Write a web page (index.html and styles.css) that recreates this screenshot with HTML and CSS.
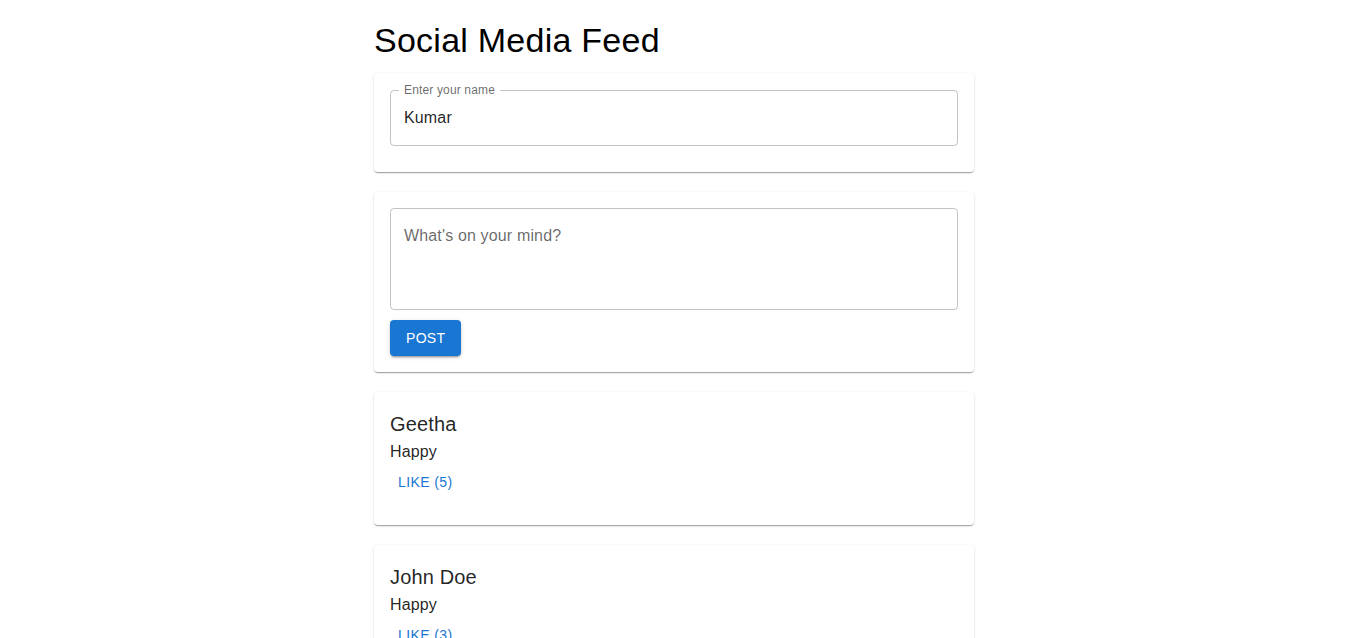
FILE: index.html
```html
<!DOCTYPE html>
<html lang="en">
<head>
<meta charset="utf-8">
<title>Social Media Feed</title>
<link rel="stylesheet" href="styles.css">
</head>
<body>
<main class="feed">
  <h4 class="title">Social Media Feed</h4>

  <section class="card card-name">
    <div class="outlined">
      <fieldset class="outline"><legend class="notch"><span>Enter your name</span></legend></fieldset>
      <label class="float-label">Enter your name</label>
      <input class="text-input" type="text" value="Kumar">
    </div>
  </section>

  <section class="card card-compose">
    <div class="outlined multiline">
      <fieldset class="outline plain"></fieldset>
      <textarea class="text-area" rows="3" placeholder="What's on your mind?"></textarea>
    </div>
    <button class="btn-contained">Post</button>
  </section>

  <article class="card post">
    <h6 class="post-author">Geetha</h6>
    <p class="post-body">Happy</p>
    <button class="btn-text">Like (5)</button>
  </article>

  <article class="card post">
    <h6 class="post-author">John Doe</h6>
    <p class="post-body">Happy</p>
    <button class="btn-text">Like (3)</button>
  </article>
</main>
</body>
</html>
```

FILE: styles.css
```css
* { box-sizing: border-box; }

html, body {
  margin: 0;
  padding: 0;
  background: #fff;
}

body {
  font-family: "Liberation Sans", Arial, Helvetica, sans-serif;
  color: rgba(0, 0, 0, 0.87);
}

.feed {
  width: 600px;
  margin: 0 auto;
  padding: 19px 0 40px;
  display: flex;
  flex-direction: column;
}

.title {
  margin: 0 0 12px;
  font-size: 34px;
  line-height: 42px;
  font-weight: 400;
  letter-spacing: 0.25px;
  color: #000;
}

.card {
  background: #fff;
  border-radius: 4px;
  box-shadow: 0 2px 1px -1px rgba(0,0,0,0.2), 0 1px 1px 0 rgba(0,0,0,0.14), 0 1px 3px 0 rgba(0,0,0,0.12);
  margin-bottom: 20px;
}

.card-name {
  padding: 17px 16px 26px;
}

.card-compose {
  padding: 16px;
  display: flex;
  flex-direction: column;
  align-items: flex-start;
  gap: 10px;
}

.outlined {
  position: relative;
  width: 100%;
  height: 56px;
}

.outlined.multiline {
  height: 102px;
}

.outline {
  position: absolute;
  top: -5px;
  left: 0;
  right: 0;
  bottom: 0;
  margin: 0;
  padding: 0 8px;
  border: 1px solid rgba(0, 0, 0, 0.23);
  border-radius: 4px;
  pointer-events: none;
  min-width: 0;
}

.outline.plain {
  top: 0;
}

.notch {
  float: unset;
  width: auto;
  max-width: 100%;
  height: 11px;
  padding: 0;
  font-size: 12px;
  visibility: hidden;
  white-space: nowrap;
  overflow: hidden;
  display: block;
}

.notch span {
  padding: 0 5px;
  display: inline-block;
  letter-spacing: 0.15px;
}

.float-label {
  position: absolute;
  top: -7px;
  left: 14px;
  font-size: 12px;
  line-height: 14px;
  letter-spacing: 0.15px;
  color: rgba(0, 0, 0, 0.6);
}

.text-input,
.text-area {
  display: block;
  width: 100%;
  border: 0;
  outline: 0;
  background: transparent;
  font-family: inherit;
  font-size: 16px;
  letter-spacing: 0.15px;
  color: rgba(0, 0, 0, 0.87);
  margin: 0;
}

.text-input {
  height: 56px;
  padding: 16.5px 14px;
  line-height: 23px;
}

.text-area {
  height: 102px;
  padding: 16px 14px;
  line-height: 23px;
  resize: none;
}

.text-area::placeholder {
  color: rgba(0, 0, 0, 0.6);
  opacity: 1;
}

.btn-contained {
  font-family: inherit;
  font-size: 14px;
  line-height: 24px;
  letter-spacing: 0.3px;
  text-transform: uppercase;
  color: #fff;
  background: #1976d2;
  border: 0;
  border-radius: 4px;
  padding: 6px 16px;
  min-width: 64px;
  box-shadow: 0 3px 1px -2px rgba(0,0,0,0.2), 0 2px 2px 0 rgba(0,0,0,0.14), 0 1px 5px 0 rgba(0,0,0,0.12);
  cursor: pointer;
}

.post {
  padding: 16px 16px 24px;
  display: flex;
  flex-direction: column;
  align-items: flex-start;
}

.post-author {
  margin: 0;
  font-size: 20px;
  line-height: 32px;
  font-weight: 400;
  letter-spacing: 0.15px;
}

.post-body {
  margin: 0;
  font-size: 16px;
  line-height: 24px;
  letter-spacing: 0.15px;
}

.btn-text {
  font-family: inherit;
  font-size: 14px;
  line-height: 24.5px;
  letter-spacing: 0.4px;
  text-transform: uppercase;
  color: #1976d2;
  background: transparent;
  border: 0;
  border-radius: 4px;
  padding: 6px 8px;
  min-width: 64px;
  cursor: pointer;
}
```
